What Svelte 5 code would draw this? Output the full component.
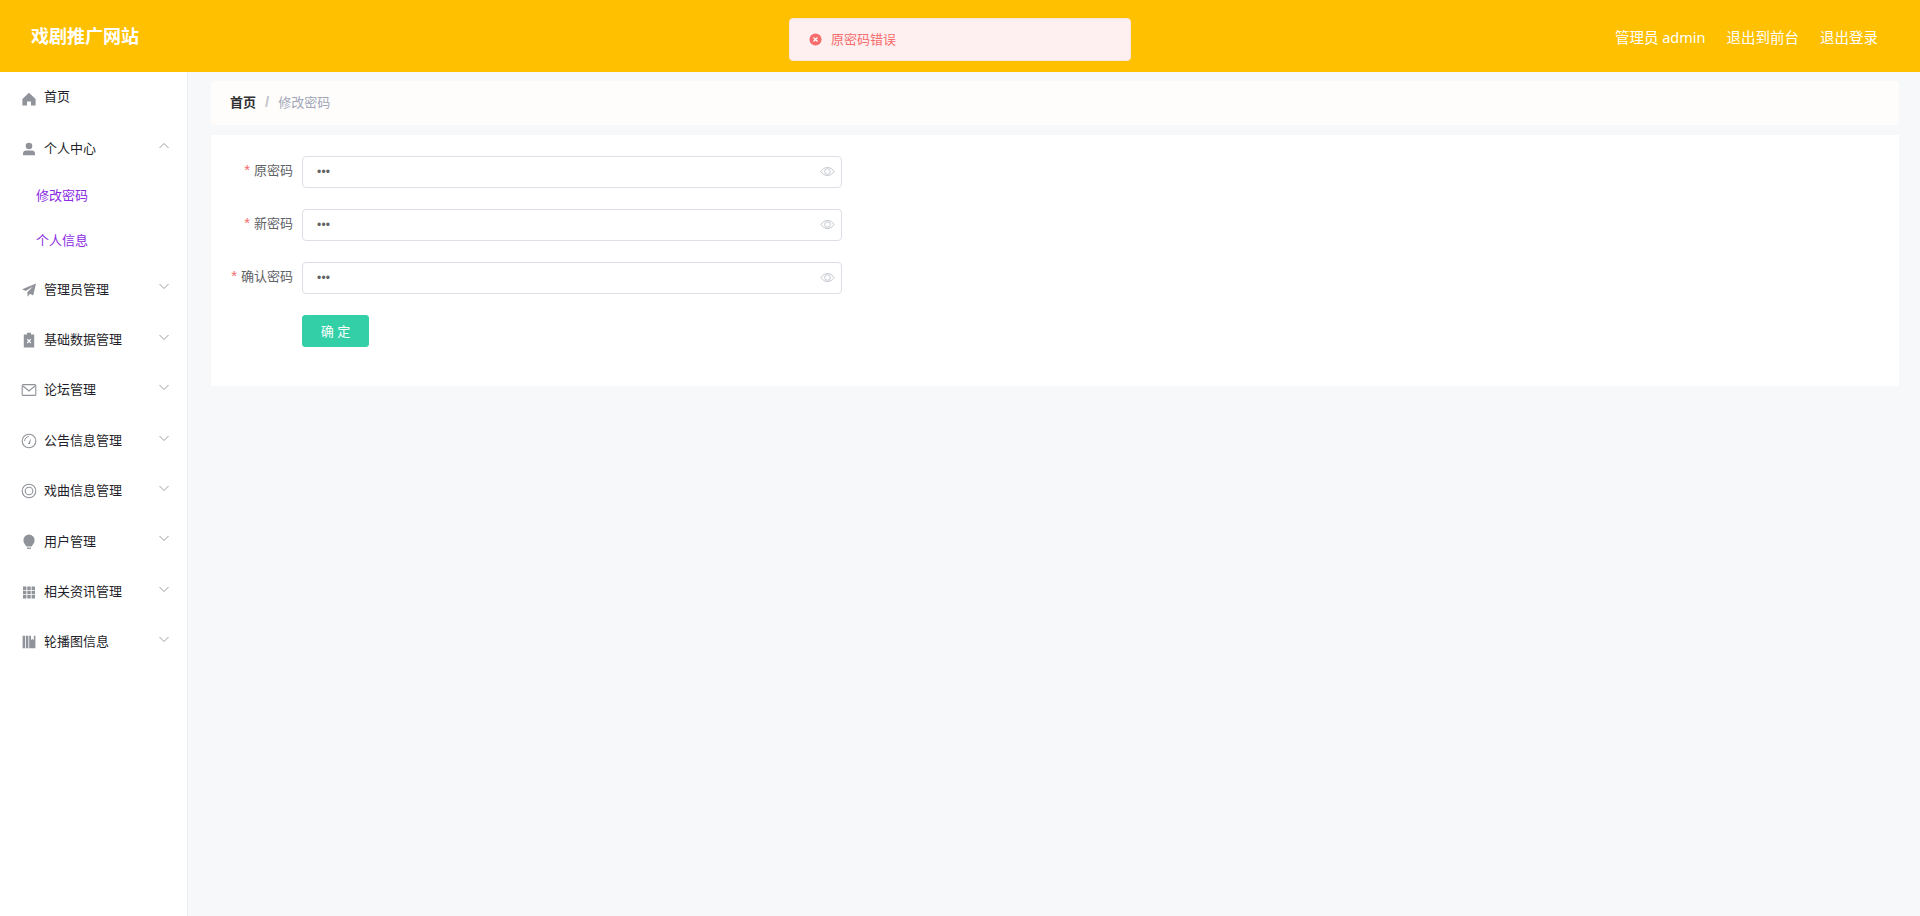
<script>
  const menu = [
    { t: '首页', i: 'home', plain: true, h: 50 },
    { t: '个人中心', i: 'user', open: true, h: 50, subs: ['修改密码', '个人信息'] },
    { t: '管理员管理', i: 'plane' },
    { t: '基础数据管理', i: 'clip' },
    { t: '论坛管理', i: 'mail' },
    { t: '公告信息管理', i: 'gauge' },
    { t: '戏曲信息管理', i: 'ring' },
    { t: '用户管理', i: 'bulb' },
    { t: '相关资讯管理', i: 'grid' },
    { t: '轮播图信息', i: 'books' }
  ];
  const fields = [
    { l: '原密码' },
    { l: '新密码' },
    { l: '确认密码' }
  ];
</script>

<div class="page">
  <header class="top">
    <div class="brand">戏剧推广网站</div>
    <div class="links">
      <span>管理员 admin</span>
      <span>退出到前台</span>
      <span>退出登录</span>
    </div>
  </header>

  <div class="toast">
    <svg class="ticon" viewBox="0 0 14 14" width="13" height="13">
      <circle cx="7" cy="7" r="6.5" fill="#f56c6c" />
      <path d="M4.8 4.8l4.4 4.4M9.2 4.8l-4.4 4.4" stroke="#fff" stroke-width="1.3" fill="none" />
    </svg>
    <span>原密码错误</span>
  </div>

  <div class="body">
    <aside class="side">
      {#each menu as m}
        <div class="item" class:first={m.plain}>
          <svg class="ic" viewBox="0 0 16 16" width="16" height="16">
            {#if m.i === 'home'}
              <path d="M8 1.800L1.400 8v6.400h4.600v-4h4v4h4.600V8z" fill="#909399" />
            {:else if m.i === 'user'}
              <circle cx="8" cy="5" r="3.300" fill="#909399" />
              <path d="M2 14.200v-1.700c0-1.700 1.300-3 3-3h6c1.700 0 3 1.300 3 3v1.700z" fill="#909399" />
            {:else if m.i === 'plane'}
              <path d="M15 1.500L1.200 7.200l3.500 1.900L12 4.400 6.300 10.200l.4 4.600 2.300-3 3.200 1.600z" fill="#909399" />
            {:else if m.i === 'clip'}
              <path d="M6 .8h4v1.800h3.200v12.800H2.800V2.600H6z" fill="#909399" />
              <path d="M6.200 7.200l3.600 3.800M9.800 7.200l-3.600 3.800" stroke="#fff" stroke-width="1.200" fill="none" />
            {:else if m.i === 'mail'}
              <rect x="1.200" y="2.600" width="13.600" height="10.800" rx="1" fill="none" stroke="#909399" stroke-width="1.100" />
              <path d="M2 4l6 5 6-5" fill="none" stroke="#909399" stroke-width="1.100" />
            {:else if m.i === 'gauge'}
              <circle cx="8" cy="8" r="6.800" fill="none" stroke="#909399" stroke-width="1.100" />
              <path d="M3.600 8A4.400 4.400 0 0 1 8 3.600" fill="none" stroke="#909399" stroke-width="1" />
              <path d="M10 5l-1 6H7z" fill="#909399" />
            {:else if m.i === 'ring'}
              <circle cx="8" cy="8" r="6.800" fill="none" stroke="#909399" stroke-width="1.100" />
              <circle cx="8" cy="8" r="3.800" fill="none" stroke="#909399" stroke-width="1.100" />
            {:else if m.i === 'bulb'}
              <path d="M8 .6a5.600 5.600 0 0 1 5.600 5.600c0 2.800-1.900 4.400-3.100 6.400H5.500c-1.200-2-3.100-3.600-3.100-6.400A5.600 5.600 0 0 1 8 .6z" fill="#909399" />
              <rect x="6" y="13.600" width="4" height="1.300" fill="#909399" />
            {:else if m.i === 'grid'}
              <path d="M2 2.500h3.400v3.400H2zM6.300 2.500h3.400v3.400H6.300zM10.600 2.500H14v3.400h-3.400zM2 6.800h3.400v3.400H2zM6.300 6.800h3.400v3.400H6.300zM10.600 6.800H14v3.400h-3.400zM2 11.100h3.400v3.400H2zM6.300 11.100h3.400v3.400H6.300zM10.600 11.100H14v3.400h-3.400z" fill="#909399" />
            {:else if m.i === 'books'}
              <path d="M1.600 1.800h2.600v12.400H1.600zM5 1.800h2.400v12.400H5zM8.200 1.800h6.200v12.400H8.200zM10 1.800v4.200l1.400-1 1.400 1V1.800z" fill="#909399" fill-rule="evenodd" />
            {/if}
          </svg>
          <span class="label">{m.t}</span>
          {#if !m.plain}
            <svg class="arrow" class:up={m.open} viewBox="0 0 12 12" width="12" height="12">
              <path d="M1.500 4l4.500 4.500L10.500 4" fill="none" stroke="#909399" stroke-width="0.9" />
            </svg>
          {/if}
        </div>
        {#if m.subs}
          {#each m.subs as s}
            <div class="sub">{s}</div>
          {/each}
        {/if}
      {/each}
    </aside>

    <main class="main">
      <nav class="crumb">
        <b>首页</b><i>/</i><span>修改密码</span>
      </nav>
      <section class="card">
        {#each fields as f}
          <div class="row">
            <label class="lbl"><em>*</em>{f.l}</label>
            <div class="input">
              <span class="dots">•••</span>
              <svg class="eye" viewBox="0 0 16 16" width="15" height="15">
                <path d="M1 8c1.800-2.800 4.200-4.300 7-4.300s5.200 1.500 7 4.300c-1.800 2.800-4.200 4.300-7 4.300S2.800 10.800 1 8z" fill="none" stroke="#c0c4cc" stroke-width="1" />
                <circle cx="8" cy="8" r="3" fill="none" stroke="#c0c4cc" stroke-width="1" />
              </svg>
            </div>
          </div>
        {/each}
        <div class="row last">
          <button class="ok">确 定</button>
        </div>
      </section>
    </main>
  </div>
</div>

<style>
  :global(body) {
    margin: 0;
    font-family: "Liberation Sans", "Noto Sans CJK SC", sans-serif;
  }
  .page {
    height: 916px;
    display: flex;
    flex-direction: column;
    overflow: hidden;
    background: #f7f8fa;
  }
  .top {
    height: 72px;
    flex: none;
    background: #ffc000;
    display: flex;
    align-items: center;
    justify-content: space-between;
    color: #fff;
    padding: 0 42px 0 31px;
  }
  .brand {
    font-size: 18px;
    font-weight: 700;
    line-height: 1;
    margin-top: 1px;
  }
  .links {
    display: flex;
    gap: 21px;
    font-size: 14.5px;
    font-family: "Noto Sans", "Noto Sans CJK SC", sans-serif;
    font-weight: 400;
  }
  .toast {
    position: absolute;
    left: 789px;
    top: 18px;
    width: 342px;
    height: 43px;
    box-sizing: border-box;
    background: #fef0f0;
    border: 1px solid #fde2e2;
    border-radius: 4px;
    display: flex;
    align-items: center;
    padding-left: 19px;
    color: #f56c6c;
    font-size: 13px;
  }
  .toast span { margin-bottom: 2px; }
  .ticon { margin-right: 9px; }
  .body {
    flex: 1;
    display: flex;
    min-height: 0;
  }
  .side {
    width: 187px;
    flex: none;
    background: #fff;
    border-right: 1px solid #eceef2;
  }
  .item {
    height: 50.4px;
    display: flex;
    align-items: center;
    padding-left: 21px;
    font-size: 13px;
    color: #1f1f2b;
    position: relative;
  }
  .item.first {
    height: 50px;
    margin-bottom: 2px;
  }
  .ic {
    width: 16px;
    height: 16px;
    flex: none;
    margin-right: 7px;
  }
  .item.first .ic { margin-top: 4px; }
  .label { margin-bottom: 3px; }
  .arrow {
    position: absolute;
    left: 158px;
    top: 16px;
  }
  .arrow.up { transform: rotate(180deg); }
  .sub {
    height: 45px;
    box-sizing: border-box;
    display: flex;
    align-items: center;
    padding: 0 0 4px 36px;
    font-size: 13px;
    color: #8a2be2;
  }
  .main {
    flex: 1;
    min-width: 0;
    padding: 9px 21px 0 23px;
  }
  .crumb {
    height: 44px;
    box-sizing: border-box;
    display: flex;
    align-items: center;
    padding: 0 0 3px 19px;
    background: #fffdfb;
    border-radius: 4px;
    font-size: 13px;
  }
  .crumb b { color: #303133; font-weight: 700; }
  .crumb i { color: #c0c4cc; font-style: normal; font-weight: 700; font-size: 15px; margin: 0 9px; }
  .crumb span { color: #a0a6b8; }
  .card {
    margin-top: 10px;
    height: 251px;
    box-sizing: border-box;
    background: #fff;
    padding-top: 21px;
  }
  .row {
    display: flex;
    align-items: center;
    height: 32px;
    margin-bottom: 21px;
    padding-left: 91px;
    position: relative;
  }
  .lbl {
    position: absolute;
    left: 0;
    top: 6px;
    line-height: 18px;
    width: 82px;
    text-align: right;
    font-size: 13px;
    color: #606266;
  }
  .lbl em {
    color: #f56c6c;
    font-style: normal;
    font-size: 15px;
    line-height: 15px;
    margin-right: 4px;
  }
  .input {
    width: 540px;
    height: 32px;
    box-sizing: border-box;
    border: 1px solid #dcdfe6;
    border-radius: 4px;
    background: #fff;
    display: flex;
    align-items: center;
    justify-content: space-between;
    padding: 0 6px 0 14px;
  }
  .dots {
    font-size: 12px;
    line-height: 1;
    letter-spacing: 0.2px;
    color: #606266;
    margin-bottom: 1px;
  }
  .eye { margin-bottom: 2px; }
  .ok {
    width: 67px;
    height: 32px;
    border: 1px solid #33cfa7;
    border-radius: 3px;
    background: #33cfa7;
    color: #fff;
    font-size: 13px;
    font-family: inherit;
    padding: 0 0 2px;
  }
</style>
